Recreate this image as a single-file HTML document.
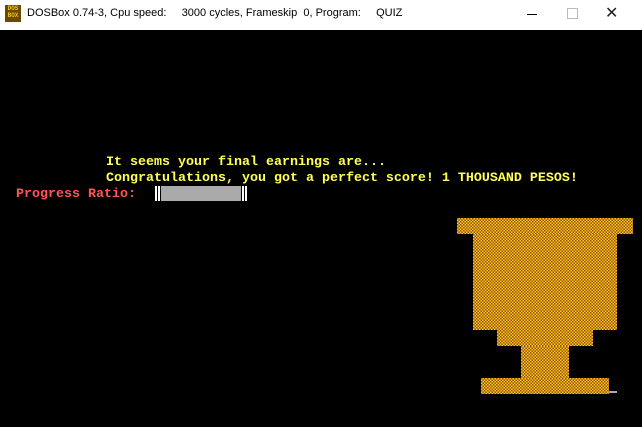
<!DOCTYPE html>
<html><head><style>
body{margin:0;width:642px;height:427px;background:#000;overflow:hidden;position:relative;font-family:"Liberation Sans",sans-serif}
.tb{position:absolute;left:0;top:0;width:642px;height:30px;background:#fff}
.tb .t{position:absolute;left:27px;top:7px;font-size:11px;color:#000;white-space:pre}
.ic{position:absolute;left:5px;top:5px;width:16px;height:17px;background:#6b4a00;color:#f0c020;font-size:6px;line-height:7px;font-weight:bold;text-align:center;font-family:"Liberation Mono",monospace}
.txt{position:absolute;font-family:"Liberation Mono",monospace;font-size:13.33px;font-weight:bold;white-space:pre;line-height:16px}
.y{color:#ffff55}.r{color:#ff5555}
.tr{position:absolute;background:repeating-conic-gradient(#f0d020 0 25%,#a04808 0 50%) 0 0/3px 3px}
</style></head><body>
<div class="tb"><div class="ic">DOS<br>BOX</div><div class="t">DOSBox 0.74-3, Cpu speed:     3000 cycles, Frameskip  0, Program:     QUIZ</div>
<div style="position:absolute;left:527px;top:14px;width:10px;height:1px;background:#000"></div>
<div style="position:absolute;left:567px;top:8px;width:9px;height:9px;border:1px solid #bbb"></div>
<div style="position:absolute;left:605px;top:3px;font-size:16px;color:#222">✕</div>
</div>
<div class="txt y" style="left:106px;top:155px">It seems your final earnings are...</div>
<div class="txt y" style="left:106px;top:171px">Congratulations, you got a perfect score! 1 THOUSAND PESOS!</div>
<div class="txt r" style="left:16px;top:187px">Progress Ratio:</div>
<div style="position:absolute;left:155px;top:186px;width:2px;height:15px;background:#fff"></div>
<div style="position:absolute;left:158px;top:186px;width:2px;height:15px;background:#fff"></div>
<div style="position:absolute;left:161px;top:186px;width:80px;height:15px;background:#aaa"></div>
<div style="position:absolute;left:242px;top:186px;width:2px;height:15px;background:#fff"></div>
<div style="position:absolute;left:245px;top:186px;width:2px;height:15px;background:#fff"></div>
<div class="tr" style="left:457px;top:218px;width:176px;height:16px"></div>
<div class="tr" style="left:473px;top:234px;width:144px;height:96px"></div>
<div class="tr" style="left:497px;top:330px;width:96px;height:16px"></div>
<div class="tr" style="left:521px;top:346px;width:48px;height:32px"></div>
<div class="tr" style="left:481px;top:378px;width:128px;height:16px"></div>
<div style="position:absolute;left:609px;top:391px;width:8px;height:2px;background:#aaa"></div>
</body></html>
